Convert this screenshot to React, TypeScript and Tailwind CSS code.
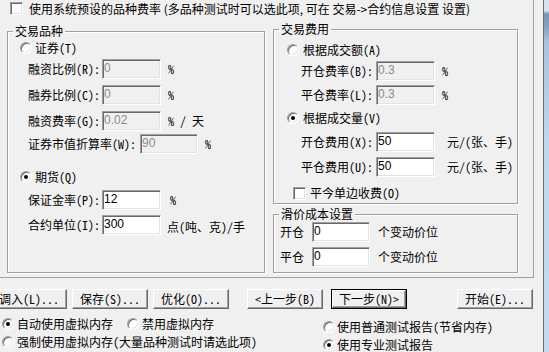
import type { ReactNode } from "react";

function Radio({ checked }: { checked?: boolean }) {
  return (
    <span className="flex h-[12px] w-[12px] shrink-0 items-center justify-center rounded-full border border-t-[#a0a0a0] border-l-[#a0a0a0] border-r-white border-b-white bg-white shadow-[inset_1px_1px_0_#696969,inset_-1px_-1px_0_#e3e3e3]">
      {checked && <span className="h-[4px] w-[4px] rounded-full bg-black" />}
    </span>
  );
}

function Check() {
  return (
    <span className="h-[13px] w-[13px] shrink-0 border border-t-[#a0a0a0] border-l-[#a0a0a0] border-r-white border-b-white bg-white shadow-[inset_1px_1px_0_#696969,inset_-1px_-1px_0_#e3e3e3]" />
  );
}

function Field({ value, disabled, className = "w-[59px]" }: { value: string; disabled?: boolean; className?: string }) {
  return (
    <div
      className={`flex h-[20px] shrink-0 items-start border border-t-[#a0a0a0] border-l-[#a0a0a0] border-r-white border-b-white pl-[1px] pt-[1px] font-['Liberation_Sans',sans-serif] text-[12px] leading-[14px] shadow-[inset_1px_1px_0_#696969,inset_-1px_-1px_0_#e3e3e3] ${
        disabled ? "bg-[#f0f0f0] text-[#8c8c8c]" : "bg-white text-black"
      } ${className}`}
    >
      {value}
    </div>
  );
}

function Group({ title, className, children }: { title: string; className: string; children: ReactNode }) {
  return (
    <div className={`relative flex shrink-0 flex-col border border-[#a0a0a0] shadow-[inset_1px_1px_0_#fff,1px_1px_0_#fff] ${className}`}>
      <span className="absolute left-[5px] top-[-8px] bg-[#f0f0f0] px-[2px] leading-[14px]">{title}</span>
      {children}
    </div>
  );
}

function Btn({ children, className = "", def }: { children: ReactNode; className?: string; def?: boolean }) {
  return (
    <div className={`h-[20px] w-[76px] shrink-0 ${def ? "border border-black" : ""} ${className}`}>
      <div className="flex h-full w-full items-center justify-center whitespace-nowrap border border-t-white border-l-white border-r-[#696969] border-b-[#696969] bg-[#f0f0f0] shadow-[inset_-1px_-1px_0_#a0a0a0]">
        {children}
      </div>
    </div>
  );
}

export default function App() {
  return (
    <div className="flex h-[352px] w-[549px] overflow-hidden bg-[#f0f0f0] font-['Noto_Sans_CJK_SC',sans-serif] text-[12px] leading-[14px] text-black [font-feature-settings:'hwid']">
      <div className="flex w-[544px] shrink-0 flex-col border-r border-[#6e6e6e]">
        {/* page */}
        <div className="h-[278px] w-[534px] shrink-0 border-r border-b border-[#a0a0a0]">
          <div className="mt-[2px] flex h-[13px] items-center pl-[10px]">
            <Check />
            <span className="ml-[6px] whitespace-nowrap [font-feature-settings:normal]">
              使用系统预设的品种费率 (多品种测试时可以选此项, 可在 交易-&gt;合约信息设置 设置)
            </span>
          </div>

          <div className="flex items-start pl-[7px]">
            {/* 交易品种 */}
            <Group title="交易品种" className="mt-[16px] h-[242px] w-[258px]">
              <div className="mt-[8px] flex h-[16px] items-center pl-[12px]">
                <Radio />
                <span className="ml-[3px]">证券(T)</span>
              </div>
              <div className="mt-[3px] flex h-[20px] items-center pl-[20px]">
                <span className="w-[74px]">融资比例(R):</span>
                <Field value="0" disabled />
                <span className="ml-[7px]">%</span>
              </div>
              <div className="mt-[6px] flex h-[20px] items-center pl-[20px]">
                <span className="w-[74px]">融券比例(C):</span>
                <Field value="0" disabled />
                <span className="ml-[7px]">%</span>
              </div>
              <div className="mt-[6px] flex h-[20px] items-center pl-[20px]">
                <span className="w-[74px]">融资费率(G):</span>
                <Field value="0.02" disabled />
                <span className="ml-[7px] whitespace-pre">% / 天</span>
              </div>
              <div className="mt-[3px] flex h-[20px] items-center pl-[20px]">
                <span className="w-[112px]">证券市值折算率(W):</span>
                <Field value="90" disabled className="w-[58px]" />
                <span className="ml-[7px]">%</span>
              </div>
              <div className="mt-[15px] flex h-[16px] items-center pl-[12px]">
                <Radio checked />
                <span className="ml-[3px]">期货(Q)</span>
              </div>
              <div className="mt-[5px] flex h-[20px] items-center pl-[20px]">
                <span className="w-[74px]">保证金率(P):</span>
                <Field value="12" />
                <span className="ml-[9px]">%</span>
              </div>
              <div className="mt-[5px] flex h-[20px] items-center pl-[20px]">
                <span className="w-[74px]">合约单位(I):</span>
                <Field value="300" />
                <span className="ml-[6px] mt-[3px]">点(吨、克)/手</span>
              </div>
            </Group>

            {/* right column */}
            <div className="ml-[8px] mt-[14px] flex flex-col">
              <Group title="交易费用" className="h-[175px] w-[245px]">
                <div className="mt-[12px] flex h-[16px] items-center pl-[13px]">
                  <Radio />
                  <span className="ml-[4px]">根据成交额(A)</span>
                </div>
                <div className="mt-[3px] flex h-[20px] items-center pl-[27px]">
                  <span className="w-[75px]">开仓费率(B):</span>
                  <Field value="0.3" disabled />
                  <span className="ml-[7px]">%</span>
                </div>
                <div className="mt-[4px] flex h-[20px] items-center pl-[27px]">
                  <span className="w-[75px]">平仓费率(L):</span>
                  <Field value="0.3" disabled />
                  <span className="ml-[7px]">%</span>
                </div>
                <div className="mt-[5px] flex h-[16px] items-center pl-[13px]">
                  <Radio checked />
                  <span className="ml-[4px]">根据成交量(V)</span>
                </div>
                <div className="mt-[6px] flex h-[20px] items-center pl-[27px]">
                  <span className="w-[75px]">开仓费用(X):</span>
                  <Field value="50" />
                  <span className="ml-[12px]">元/(张、手)</span>
                </div>
                <div className="mt-[5px] flex h-[20px] items-center pl-[27px]">
                  <span className="w-[75px]">平仓费用(U):</span>
                  <Field value="50" />
                  <span className="ml-[12px]">元/(张、手)</span>
                </div>
                <div className="mt-[8px] flex h-[16px] items-center pl-[19px]">
                  <Check />
                  <span className="ml-[4px]">平今单边收费(O)</span>
                </div>
              </Group>

              <Group title="滑价成本设置" className="mt-[10px] h-[59px] w-[245px]">
                <div className="mt-[7px] flex h-[20px] items-center pl-[6px]">
                  <span className="w-[32px]">开仓</span>
                  <Field value="0" className="w-[58px]" />
                  <span className="ml-[8px]">个变动价位</span>
                </div>
                <div className="mt-[5px] flex h-[20px] items-center pl-[6px]">
                  <span className="w-[32px]">平仓</span>
                  <Field value="0" className="w-[58px]" />
                  <span className="ml-[8px]">个变动价位</span>
                </div>
              </Group>
            </div>
          </div>
        </div>

        {/* buttons */}
        <div className="mt-[11px] flex">
          <Btn className="ml-[-9px]">调入(L)...</Btn>
          <Btn className="ml-[5px]">保存(S)...</Btn>
          <Btn className="ml-[5px]">优化(O)...</Btn>
          <Btn className="ml-[18px]">&lt;上一步(B)</Btn>
          <Btn className="ml-[8px]" def>
            下一步(N)&gt;
          </Btn>
          <Btn className="ml-[50px] w-[66px]">开始(E)...</Btn>
        </div>

        {/* memory / report options */}
        <div className="mt-[8px] flex">
          <div className="flex w-[323px] shrink-0 flex-col gap-[4px] pl-[2px]">
            <div className="flex h-[14px] items-center">
              <Radio checked />
              <span className="ml-[3px]">自动使用虚拟内存</span>
              <span className="ml-[14px]">
                <Radio />
              </span>
              <span className="ml-[3px]">禁用虚拟内存</span>
            </div>
            <div className="flex h-[14px] items-center">
              <Radio />
              <span className="ml-[3px] whitespace-nowrap">强制使用虚拟内存(大量品种测试时请选此项)</span>
            </div>
          </div>
          <div className="mt-[3px] flex flex-col gap-[4px]">
            <div className="flex h-[14px] items-center">
              <Radio />
              <span className="ml-[2px] whitespace-nowrap">使用普通测试报告(节省内存)</span>
            </div>
            <div className="flex h-[14px] items-center">
              <Radio checked />
              <span className="ml-[2px]">使用专业测试报告</span>
            </div>
          </div>
        </div>
      </div>

      {/* window frame */}
      <div className="w-[5px] shrink-0 bg-[linear-gradient(180deg,#d6e2ee_0%,#d6e2ee_3%,#7696b8_4%,#86a4c5_8%,#a7c3e0_12%,#bdd8f0_40%,#c3dcf2_100%)]" />
    </div>
  );
}
